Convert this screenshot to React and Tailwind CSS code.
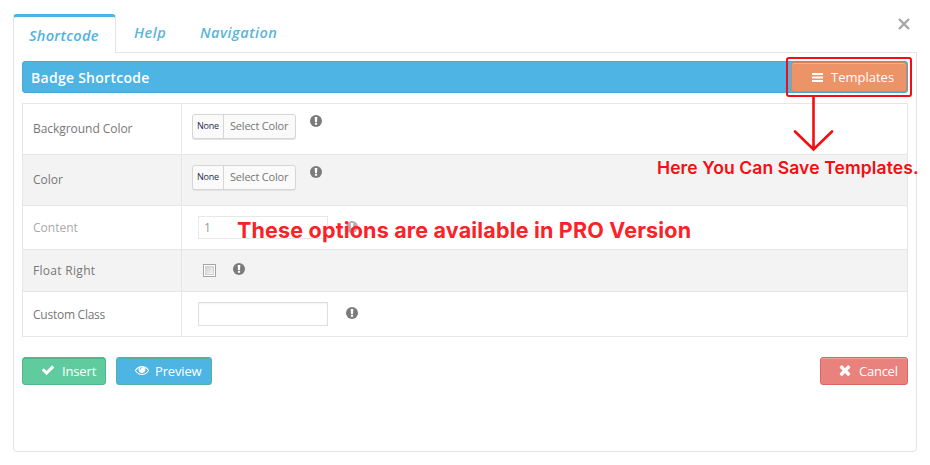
const UI = "font-['Open_Sans','Noto_Sans',sans-serif]";

function Check({ className }) {
  return (
    <svg viewBox="0 0 1792 1792" fill="currentColor" className={className}>
      <path d="M1671 566q0 40-28 68l-724 724-136 136q-28 28-68 28t-68-28l-136-136-362-362q-28-28-28-68t28-68l136-136q28-28 68-28t68 28l294 295 656-657q28-28 68-28t68 28l136 136q28 28 28 68z" />
    </svg>
  );
}

function Cross({ className }) {
  return (
    <svg viewBox="0 0 1792 1792" fill="currentColor" className={className}>
      <path d="M1490 1322q0 40-28 68l-136 136q-28 28-68 28t-68-28l-294-294-294 294q-28 28-68 28t-68-28l-136-136q-28-28-28-68t28-68l294-294-294-294q-28-28-28-68t28-68l136-136q28-28 68-28t68 28l294 294 294-294q28-28 68-28t68 28l136 136q28 28 28 68t-28 68l-294 294 294 294q28 28 28 68z" />
    </svg>
  );
}

function Eye({ className }) {
  return (
    <svg viewBox="0 0 1792 1792" fill="currentColor" className={className}>
      <path d="M1664 960q-152-236-381-353 61 104 61 225 0 185-131.5 316.5t-316.5 131.5-316.5-131.5-131.5-316.5q0-121 61-225-229 117-381 353 133 205 333.5 326.5t434.5 121.5 434.5-121.5 333.5-326.5zm-720-384q0-20-14-34t-34-14q-125 0-214.5 89.5t-89.5 214.5q0 20 14 34t34 14 34-14 14-34q0-86 61-147t147-61q20 0 34-14t14-34zm848 384q0 34-20 69-140 230-376.5 368.5t-499.5 138.5-499.5-139-376.5-368q-20-35-20-69t20-69q140-229 376.5-368t499.5-139 499.5 139 376.5 368q20 35 20 69z" />
    </svg>
  );
}

function Info({ className = "" }) {
  return (
    <svg viewBox="0 0 12 12" className={`size-3 shrink-0 ${className}`}>
      <circle cx="6" cy="6" r="6" fill="#7b7b7b" />
      <path d="M4.7 2h2.6l-.3 5h-2zM4.9 7.8h2.2v2H4.9z" fill="#fff" />
    </svg>
  );
}

function ColorPicker() {
  return (
    <div className="flex h-[25px] w-[104px] rounded-[3px] border border-[#d6d6d6] bg-[#fafafa] shadow-[0_1px_0_#e4e4e4]">
      <span className="w-[31px] border-r border-[#d6d6d6] pl-1 text-[9px] leading-[22px] font-medium tracking-[-0.2px] text-[#1d2b4a]">None</span>
      <span className="pl-1.5 text-[11px] leading-[22px] tracking-[-0.2px] whitespace-nowrap text-[#777]">Select Color</span>
    </div>
  );
}

function Row({ label, tone, height, children }) {
  return (
    <div className={`flex border-b border-[#e6e6e6] ${height} ${tone}`}>
      <div className="flex w-[159px] shrink-0 items-center border-r border-[#e6e6e6] pl-2.5 text-[12px] font-medium whitespace-nowrap">{label}</div>
      <div className="flex grow items-start">{children}</div>
    </div>
  );
}

export default function App() {
  return (
    <div className={`relative h-[465px] w-[930px] overflow-hidden bg-white pt-3.5 pl-[13px] ${UI}`}>
      <div className="flex h-[38px] text-[14.5px] font-semibold italic text-[#5ab5d8]">
        <div className="relative z-10 h-[39px] w-[103px] rounded-t-[4px] border-x border-t-[3px] border-x-[#e4e4e4] border-t-[#4db4e4] bg-white pt-[7px] pl-[15px] leading-6 text-[#4db4e4]">
          <span className="tracking-[0.3px]">Shortcode</span>
        </div>
        <span className="ml-[18px] w-[66px] pt-[7px] leading-6 tracking-[0.5px]">Help</span>
        <span className="pt-[7px] leading-6 tracking-[0.5px]">Navigation</span>
        <svg viewBox="0 0 12 12" className="mt-1 mr-5 ml-auto size-3" stroke="#a3a3a3" strokeWidth="2.2">
          <path d="M1 1l10 10M11 1L1 11" />
        </svg>
      </div>
      <main className="h-[400px] w-[904px] rounded-b-[4px] border border-[#e4e4e4] px-2 pt-2">
        <header className="flex h-8 items-center rounded-[3px] border border-[#47a9d7] bg-[#4db4e4] pl-2 text-white">
          <h1 className="text-[14px] font-semibold tracking-[0.27px]">Badge Shortcode</h1>
          <button className="ml-auto flex h-[30px] w-[116px] items-center rounded-[3px] border border-[#df8257] bg-[#ed9368] pl-5 text-[13px] shadow-[inset_0_1px_0_#f2b08f]">
            <svg viewBox="0 0 11 9" className="mt-px h-[9px] w-[11px]" fill="#fff">
              <path d="M0 0h11v2H0zM0 3.5h11v2H0zM0 7h11v2H0z" />
            </svg>
            <span className="mt-px ml-2">Templates</span>
          </button>
        </header>
        <section className="mt-2.5 border border-b-0 border-[#e6e6e6] text-[#777]">
          <Row label={<span className="tracking-[-0.05px]">Background Color</span>} height="h-[51px]" tone="bg-white">
            <div className="pt-2.5 pl-2.5"><ColorPicker /></div>
            <Info className="mt-[11px] ml-3.5" />
          </Row>
          <Row label="Color" height="h-[51px]" tone="bg-[#f3f3f3]">
            <div className="pt-2.5 pl-2.5"><ColorPicker /></div>
            <Info className="mt-[11px] ml-3.5" />
          </Row>
          <Row label={<span className="mt-px text-[#a9a9a9]">Content</span>} height="h-11" tone="bg-white">
            <div className="mt-2.5 ml-4 h-[23px] w-[130px] border border-[#e8e8e8] pl-[5px] text-[12px] leading-[22px] text-[#999]">1</div>
            <Info className="mt-[15px] ml-[18px] opacity-60" />
          </Row>
          <Row label={<span className="tracking-[0.3px]">Float Right</span>} height="h-[42px]" tone="bg-[#f3f3f3]">
            <div className="mt-3.5 ml-[21px] size-[13px] border border-[#a5a5a5] bg-white p-px">
              <div className="size-full border border-[#d2d2d2] bg-linear-to-br from-[#cdd1d5] to-[#f5f5f5]" />
            </div>
            <Info className="mt-[13px] ml-[17px]" />
          </Row>
          <Row label={<span className="mt-px tracking-[-0.25px]">Custom Class</span>} height="h-[45px]" tone="bg-white">
            <div className="mt-2.5 ml-4 h-6 w-[130px] border border-[#dfdfdf] shadow-[inset_0_1px_2px_#f3f3f3]" />
            <Info className="mt-[15px] ml-[18px]" />
          </Row>
        </section>
        <footer className="mt-5 flex text-[13px] text-white">
          <button className="flex h-7 w-[84px] items-center rounded-[3px] border border-[#50b788] bg-[#61cba0] pl-[18px] shadow-[inset_0_1px_0_#50b788]">
            <Check className="mb-0.5 size-3.5" />
            <span className="mt-px ml-[7px] tracking-[-0.15px]">Insert</span>
          </button>
          <button className="ml-2.5 flex h-7 w-24 items-center rounded-[3px] border border-[#50b1a4] bg-[#4db4e4] pl-[18px] shadow-[inset_0_1px_0_#50b1a4]">
            <Eye className="mb-0.5 size-[14px]" />
            <span className="mt-px ml-[6px] tracking-[-0.15px]">Preview</span>
          </button>
          <button className="ml-auto flex h-7 w-[88px] items-center rounded-[3px] border border-[#dc6662] bg-[#e9827c] pl-4 shadow-[inset_0_1px_0_#f0a19d]">
            <Cross className="mb-0.5 size-4" />
            <span className="mt-px ml-[6px] tracking-[-0.25px]">Cancel</span>
          </button>
        </footer>
      </main>
      <div className="absolute top-[57px] left-[786px] z-20 h-10 w-[126px] rounded-[3px] border-2 border-[#f40d12]" />
      <svg className="absolute top-[96px] left-[793px] z-20 h-[56px] w-[41px]" viewBox="0 0 41 56" fill="none" stroke="#f40d12" strokeWidth="2.6" strokeLinecap="round">
        <path d="M20.5 0v53M2 35.5L20.5 53.5L39 35.5" />
      </svg>
      <p className="absolute top-[156px] left-[657px] z-20 text-[17.5px] leading-6 font-semibold tracking-[0.11px] whitespace-nowrap text-[#f40d12] font-['Inter',sans-serif]">Here You Can Save Templates.</p>
      <p className="absolute top-[215px] left-[237px] z-20 text-[21.5px] leading-[30px] font-bold tracking-[0.18px] whitespace-nowrap text-[#fb2227] font-['Inter',sans-serif]">These options are available in PRO Version</p>
    </div>
  );
}
